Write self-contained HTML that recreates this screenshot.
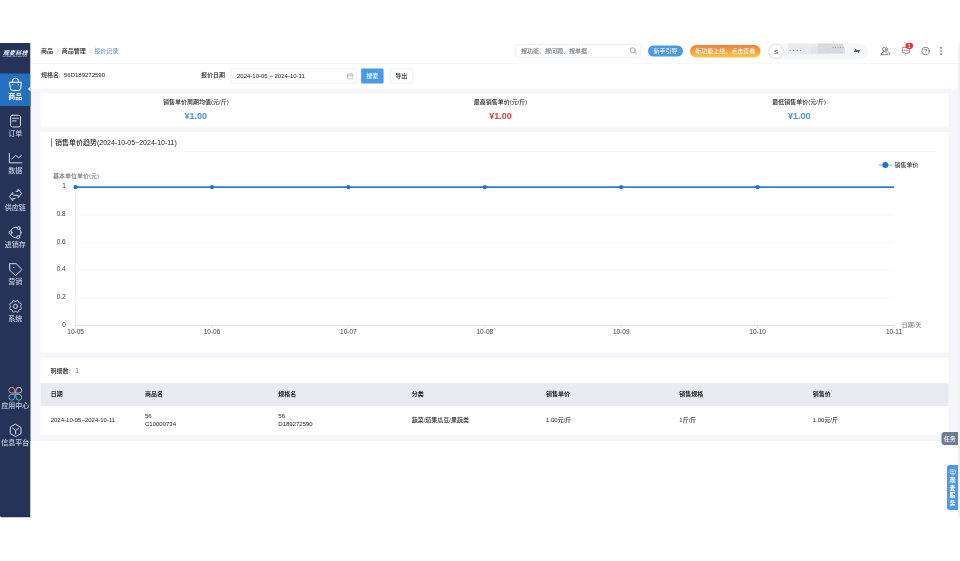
<!DOCTYPE html>
<html lang="zh-CN">
<head>
<meta charset="utf-8">
<title>报价记录</title>
<style>
*{box-sizing:border-box;margin:0;padding:0}
html,body{width:960px;height:561px;overflow:hidden;background:#fff}
body{font-family:"Liberation Sans","Noto Sans CJK SC",sans-serif;color:#333;font-weight:500}
#stage{position:absolute;left:0;top:43px;width:1920px;height:949px;transform:scale(.5);transform-origin:0 0;background:#fff;overflow:hidden;font-size:12px}
#bg{position:absolute;left:61px;top:0;right:0;height:796px;background:#f5f6fa}
.abs{position:absolute}
/* sidebar */
#side{position:absolute;left:0;top:0;width:61px;height:949px;background:#243357;border-bottom-left-radius:4px}
#logo{position:absolute;left:0;top:0;width:61px;height:60px;color:#fff;text-align:center}
#logo b{position:absolute;left:0;width:61px;top:9px;font-size:11.5px;line-height:20px;font-style:italic;font-weight:900;letter-spacing:.9px;color:#e6eaf4;padding-left:1px}
#logo i{position:absolute;left:4px;top:24px;width:52px;height:6px;font-size:4.1px;line-height:6px;font-style:normal;font-weight:700;color:#c3cbdc;white-space:nowrap;letter-spacing:0;text-align:center}
.nav{position:absolute;left:0;width:61px;height:65px;text-align:center;color:#c6cede}
.nav svg{position:absolute;left:16px;top:6px;width:30px;height:30px;fill:none;stroke:#d5dbe8;stroke-width:2;stroke-linecap:round;stroke-linejoin:round}
.nav span{position:absolute;left:0;width:61px;top:36px;font-size:14px;line-height:18px}
.nav.on{background:#2470be;color:#fff}
.nav.on span{font-weight:700}
.nav.on svg{stroke:#fff}
.nav.on:after{content:"";position:absolute;right:0;top:26px;border:5px solid transparent;border-right-color:#fff;border-left:0}
/* header */
#head{position:absolute;left:61px;top:0;right:0;height:41px;background:#fff;border-bottom:1px solid #e3e5e9}
#crumb{position:absolute;left:21px;top:7px;font-size:12px;line-height:18px;color:#222;white-space:nowrap}
#crumb em{font-style:normal;color:#c0c4cc;margin:0 7px}
#crumb u{text-decoration:none;color:#5f9fd8}

#srch{position:absolute;left:970px;top:3px;width:250px;height:26px;border:1px solid #d6dae1;border-radius:2px;background:#fff;font-size:12px;line-height:24px;color:#70757e;padding-left:10px;white-space:nowrap}
#srch svg{position:absolute;right:5px;top:4px;width:16px;height:16px;fill:none;stroke:#888;stroke-width:1.4;stroke-linecap:round}
.pill{position:absolute;color:#fff;font-size:12px;text-align:center;white-space:nowrap;font-weight:400}
#p1{left:1235px;top:5px;width:70px;height:22px;line-height:22px;border-radius:11px;background:#4a9ae6}
#p2{left:1319px;top:4px;width:141px;height:25px;line-height:25px;border-radius:13px;background:linear-gradient(180deg,#f0803f 0%,#f5a23e 50%,#f8c94a 100%)}
#user{position:absolute;left:1475px;top:1px;width:200px;height:32px;border-radius:16px;background:#f6f7f9}
#ava{position:absolute;left:1px;top:1px;width:30px;height:30px;border-radius:50%;background:#fff;border:1px solid #bcc3cd;font-size:12px;line-height:28px;text-align:center;color:#222;font-weight:400}
#blur{position:absolute;left:40px;top:0;width:124px;height:24px;background:linear-gradient(#d8dade,#d8dade) 60px 0/50px 20px no-repeat,linear-gradient(#e1e3e7,#e1e3e7) 46px 8px/68px 12px no-repeat,linear-gradient(#e8eaee,#e8eaee) 0 0/82px 22px no-repeat;filter:blur(1.2px);font-size:9px;line-height:26px;color:#6b6f78;letter-spacing:4px;white-space:nowrap;padding-left:3px;font-weight:700}
#blur span{margin-left:58px;letter-spacing:2px;position:relative;top:-5px}
#user svg{position:absolute;left:172px;top:10px;width:12px;height:10px;fill:#2a2a2a}
.hic{position:absolute;top:6px;width:20px;height:20px;fill:none;stroke:#555;stroke-width:1.7;stroke-linecap:round;stroke-linejoin:round}
#badge{position:absolute;left:1750px;top:-1px;width:15px;height:13px;border-radius:7px;background:#e5302f;color:#fff;font-size:10px;line-height:14px;text-align:center;font-weight:700}
/* filter */
#filt{position:absolute;left:61px;top:41px;right:0;height:50px;background:#fff}
#filt .lb{position:absolute;top:13px;font-size:12px;line-height:20px;color:#222;white-space:nowrap}
#date{position:absolute;left:402px;top:10px;width:250px;height:30px;border:1px solid #dcdfe6;border-radius:2px;font-size:12px;line-height:28px;padding-left:10px;color:#222;white-space:nowrap}
#date svg{position:absolute;right:5px;top:8px;width:13px;height:13px;fill:none;stroke:#999;stroke-width:1.2}
.btn{position:absolute;top:10px;width:45px;height:30px;line-height:28px;font-size:12px;text-align:center;border-radius:2px;border:1px solid #dcdfe6;background:#fff;color:#222}
.btn.pri{background:#4a9ae6;border-color:#4a9ae6;color:#fff}
/* stat */
.card{position:absolute;left:81px;width:1816px;background:#fff}
#stat{top:101px;height:66px;display:flex;justify-content:space-around}
#stat div{text-align:center;padding-top:7px}
#stat p{font-size:12px;line-height:20px;color:#222;white-space:nowrap}
#stat b{display:block;font-size:18px;line-height:22px;margin-top:7px;color:#4893e0}
#stat b.r{color:#d2423a}

/* chart */
#chart{top:178px;height:441px}
#chart:before{content:"";position:absolute;left:20px;right:20px;top:38px;height:1px;background:#f4f5f7}
#chart h3{position:absolute;left:21px;top:12px;height:18px;border-left:2px solid #4c92d6;padding-left:6px;font-size:14px;line-height:18px;font-weight:500;color:#222;white-space:nowrap}
#chart svg{position:absolute;left:0;top:0;width:1816px;height:440px;font-family:"Liberation Sans","Noto Sans CJK SC",sans-serif;font-size:12px}
/* table */
#tbl{top:630px;height:156px}
#cnt{position:absolute;left:20px;top:15px;font-size:12px;line-height:20px;color:#222}
#cnt b{color:#3f84cf;font-weight:500;margin-left:10px;font-size:13px}
#th{position:absolute;left:0;top:50px;width:1816px;height:46px;background:#e9ebf1}
#tr{position:absolute;left:0;top:96px;width:1816px;height:60px;border-bottom:1px solid #e9ebef}
.c{position:absolute;font-size:12px;white-space:nowrap;color:#222}
#th .c{top:11.5px;line-height:20px;font-weight:700}
#tr .c{top:calc(50% - 1.5px);transform:translateY(-50%);line-height:16px}
#foot{position:absolute;left:61px;top:796px;right:0;bottom:0;background:#fff}
#sb{position:absolute;left:1916px;top:0;width:4px;height:949px;background:#f0f1f3}
#task{position:absolute;left:1883px;top:778px;width:33px;height:26px;background:#6f7d92;border-radius:6px 0 0 6px;color:#fff;font-size:12px;line-height:26px;text-align:center}
#svc{position:absolute;left:1894px;top:844px;width:22px;height:90px;background:#4a9ae6;border-radius:5px 0 0 5px;color:#fff;font-size:12px;line-height:15.4px;text-align:center;font-weight:700;padding-top:22.5px}
#svc svg{position:absolute;left:5px;top:7.5px;width:13px;height:13px;fill:none;stroke:#fff;stroke-width:1.4}
</style>
</head>
<body>
<div id="stage">
  <div id="bg"></div>
  <div id="side">
    <div id="logo"><b>观麦科技</b><i>GUANMAI TECHNOLOGY</i></div>
    <div class="nav on" style="top:61px"><svg viewBox="0 0 30 30"><path d="M3.500 11.500h23l-1 11.500a5 5 0 0 1-5 5h-11a5 5 0 0 1-5-5z"/><path d="M9 11.500V9.200a6 6 0 0 1 12 0v2.300"/><path d="M9.400 16v.5M20.800 16v.5" stroke-width="2.400"/></svg><span>商品</span></div>
    <div class="nav" style="top:135px"><svg viewBox="0 0 30 30"><rect x="5.200" y="3.500" width="19.800" height="23.400" rx="3.500"/><path d="M9 9.600h12M9 14.900h7"/></svg><span>订单</span></div>
    <div class="nav" style="top:209px"><svg viewBox="0 0 30 30"><path d="M2.700 6v18.700h25"/><path d="M7.700 17.200l7.500-7.500 6.200 5 5.500-5"/></svg><span>数据</span></div>
    <div class="nav" style="top:283px"><svg viewBox="0 0 30 30"><path d="M16.400 7.600h3.800V3.600l7.100 8.200-7.100 8.400v-4.600h-9.500l-1.200-1.500V10l-6.500 8.200 6.500 8.100V22h4.500"/></svg><span>供应链</span></div>
    <div class="nav" style="top:357px"><svg viewBox="0 0 30 30"><circle cx="15.600" cy="16" r="10.500"/><circle cx="21.200" cy="7.100" r="3" fill="#243357"/><circle cx="20.500" cy="25.300" r="3" fill="#243357"/><circle cx="5.100" cy="16" r="3" fill="#243357"/></svg><span>进销存</span></div>
    <div class="nav" style="top:431px"><svg viewBox="0 0 30 30"><path d="M3.600 4.400h12.700l11 10.700a1.200 1.200 0 0 1 0 1.700l-11.500 10.700a1.200 1.200 0 0 1-1.700 0L4.200 18.100z"/><path d="M11.200 11.800h.1" stroke-width="2.800"/></svg><span>营销</span></div>
    <div class="nav" style="top:505px"><svg viewBox="0 0 30 30"><path d="M19.7 4.2L20.3 4.5L20.8 4.9L21.2 5.4L21.3 6.3L21.3 7.2L21.5 7.7L21.9 8.1L22.2 8.5L22.6 8.8L23.0 9.2L23.5 9.4L24.4 9.4L25.3 9.5L25.8 9.9L26.2 10.4L26.5 11.0L26.7 11.5L26.8 12.1L26.6 12.8L26.1 13.5L25.5 14.1L25.3 14.7L25.2 15.2L25.2 15.7L25.2 16.2L25.3 16.7L25.5 17.3L26.1 17.9L26.6 18.6L26.8 19.3L26.7 19.9L26.5 20.4L26.2 21.0L25.8 21.5L25.3 21.9L24.4 22.0L23.5 22.0L23.0 22.2L22.6 22.6L22.2 22.9L21.9 23.3L21.5 23.7L21.3 24.2L21.3 25.1L21.2 26.0L20.8 26.5L20.3 26.9L19.7 27.2L19.2 27.4L18.6 27.5L17.9 27.3L17.2 26.8L16.6 26.2L16.0 26.0L15.5 25.9L15.0 25.9L14.5 25.9L14.0 26.0L13.4 26.2L12.8 26.8L12.1 27.3L11.4 27.5L10.8 27.4L10.3 27.2L9.7 26.9L9.2 26.5L8.8 26.0L8.7 25.1L8.7 24.2L8.5 23.7L8.1 23.3L7.8 22.9L7.4 22.6L7.0 22.2L6.5 22.0L5.6 22.0L4.7 21.9L4.2 21.5L3.8 21.0L3.5 20.4L3.3 19.9L3.2 19.3L3.4 18.6L3.9 17.9L4.5 17.3L4.7 16.7L4.8 16.2L4.8 15.7L4.8 15.2L4.7 14.7L4.5 14.1L3.9 13.5L3.4 12.8L3.2 12.1L3.3 11.5L3.5 11.0L3.8 10.4L4.2 9.9L4.7 9.5L5.6 9.4L6.5 9.4L7.0 9.2L7.4 8.8L7.8 8.5L8.1 8.1L8.5 7.7L8.7 7.2L8.7 6.3L8.8 5.4L9.2 4.9L9.7 4.5L10.3 4.2L10.8 4.0L11.4 3.9L12.1 4.1L12.8 4.6L13.4 5.2L14.0 5.4L14.5 5.5L15.0 5.5L15.5 5.5L16.0 5.4L16.6 5.2L17.2 4.6L17.9 4.1L18.6 3.9L19.2 4.0z"/><circle cx="15" cy="15.700" r="4.200"/></svg><span>系统</span></div>
    <div class="nav" style="top:680px"><svg viewBox="0 0 30 30"><path d="M13.300 14.200H7.600a5.800 5.800 0 1 1 5.700-5.800z" stroke="#e9978a"/><path d="M15.900 14.200h5.700a5.800 5.800 0 1 0-5.700-5.800z" stroke="#e8b4c2"/><path d="M13.300 16.800H7.600a5.800 5.800 0 1 0 5.700 5.800z" stroke="#5fa6e6"/><path d="M15.900 16.800h5.700a5.800 5.800 0 1 1-5.700 5.800z" stroke="#55bdb5"/></svg><span>应用中心</span></div>
    <div class="nav" style="top:754px"><svg viewBox="0 0 30 30"><path d="M15.300 2.700l10.700 6.100v12.400l-10.700 6.100-10.700-6.100V8.800z"/><path d="M9.300 10.500l6 4.500 6-4.500M15.300 15v7"/></svg><span>信息平台</span></div>
  </div>
  <div id="head">
    <div id="crumb">商品<em>/</em>商品管理<em>/</em><u>报价记录</u></div>
    <div id="srch">搜功能、搜问题、搜单据<svg viewBox="0 0 16 16"><circle cx="6.500" cy="6.500" r="5"/><path d="M10.300 10.300L15 15"/></svg></div>
    <div class="pill" id="p1">新手引导</div>
    <div class="pill" id="p2">新功能上线，点击查看</div>
    <div id="user"><div id="ava">S</div><div id="blur">····<span>·····</span></div><svg viewBox="0 0 14 10"><path d="M5 0v2.600h8.500v2H.5z"/><path d="M9 10V7.400H.5v-2h13z"/></svg></div>
    <svg class="hic" style="left:1700px" viewBox="0 0 24 24"><circle cx="9" cy="8" r="4.500"/><path d="M1.500 20c1-4.500 4-6 7.500-6s6.500 1.500 7.500 6z"/><path d="M14.500 3.800a4.500 4.500 0 0 1 0 8.400M18 14.500c2.500.8 4 2.700 4.500 5.500H20"/></svg>
    <svg class="hic" style="left:1741px" viewBox="0 0 24 24"><path d="M3.500 4.500a1.500 1.500 0 0 1 1.500-1.500h14.500a1.500 1.500 0 0 1 1.500 1.500v10.500a1.500 1.500 0 0 1-1.500 1.500h-4l-3 3.500-3-3.500h-4.500a1.500 1.500 0 0 1-1.500-1.500z"/><path d="M7.500 10h.1M12.200 10h.1M16.900 10h.1" stroke="#333" stroke-width="2.500"/></svg>
    <div id="badge">1</div>
    <svg class="hic" style="left:1780px" viewBox="0 0 24 24"><circle cx="12" cy="12" r="9"/><text x="12" y="17" text-anchor="middle" font-size="14" font-family="Liberation Sans,sans-serif" fill="#444" stroke="none" font-weight="400">?</text></svg>
    <svg class="hic" style="left:1811px;stroke:none;fill:#555" viewBox="0 0 24 24"><circle cx="12" cy="4.500" r="2"/><circle cx="12" cy="12" r="2"/><circle cx="12" cy="19.500" r="2"/></svg>
  </div>
  <div id="filt">
    <div class="lb" style="left:21px">规格名:&nbsp; 56D189272590</div>
    <div class="lb" style="left:341px">报价日期</div>
    <div id="date">2024-10-05 ~ 2024-10-11<svg viewBox="0 0 13 13"><rect x="1" y="2" width="11" height="10" rx="1"/><path d="M1 5.500h11M4 1v1.500M9 1v1.500"/></svg></div>
    <div class="btn pri" style="left:661px">搜索</div>
    <div class="btn" style="left:719px">导出</div>
  </div>
  <div class="card" id="stat">
    <div><p>销售单价周期均值(元/斤)</p><b>¥1.00</b></div>
    <div><p>最高销售单价(元/斤)</p><b class="r">¥1.00</b></div>
    <div><p>最低销售单价(元/斤)</p><b>¥1.00</b></div>
  </div>
  <div class="card" id="chart">
    <h3>销售单价趋势(2024-10-05~2024-10-11)</h3>
      <svg viewBox="0 0 1816 440">
      <path d="M70.2 110.4H1707.0" stroke="#eef0f3" stroke-width="1"/>
      <path d="M70.2 165.7H1707.0" stroke="#eef0f3" stroke-width="1"/>
      <path d="M70.2 221.0H1707.0" stroke="#eef0f3" stroke-width="1"/>
      <path d="M70.2 276.2H1707.0" stroke="#eef0f3" stroke-width="1"/>
      <path d="M70.2 331.5H1707.0" stroke="#eef0f3" stroke-width="1"/>
      <path d="M70.2 110.4V386.8" stroke="#e1e3e8" stroke-width="1"/>
      <path d="M70.2 386.8H1707.0" stroke="#c8c8c8" stroke-width="1.200"/>
      <path d="M70.2 386.8v5" stroke="#c8c8c8" stroke-width="1"/>
      <path d="M343.0 386.8v5" stroke="#c8c8c8" stroke-width="1"/>
      <path d="M615.8 386.8v5" stroke="#c8c8c8" stroke-width="1"/>
      <path d="M888.6 386.8v5" stroke="#c8c8c8" stroke-width="1"/>
      <path d="M1161.4 386.8v5" stroke="#c8c8c8" stroke-width="1"/>
      <path d="M1434.2 386.8v5" stroke="#c8c8c8" stroke-width="1"/>
      <path d="M1707.0 386.8v5" stroke="#c8c8c8" stroke-width="1"/>
      <text x="50.500" y="112.9" text-anchor="end" fill="#3a3a3a" font-size="13">1</text>
      <text x="50.500" y="168.2" text-anchor="end" fill="#3a3a3a" font-size="13">0.8</text>
      <text x="50.500" y="223.5" text-anchor="end" fill="#3a3a3a" font-size="13">0.6</text>
      <text x="50.500" y="278.7" text-anchor="end" fill="#3a3a3a" font-size="13">0.4</text>
      <text x="50.500" y="334.0" text-anchor="end" fill="#3a3a3a" font-size="13">0.2</text>
      <text x="50.500" y="389.3" text-anchor="end" fill="#3a3a3a" font-size="13">0</text>
      <text x="70.2" y="404" text-anchor="middle" fill="#3a3a3a" font-size="13">10-05</text>
      <text x="343.0" y="404" text-anchor="middle" fill="#3a3a3a" font-size="13">10-06</text>
      <text x="615.8" y="404" text-anchor="middle" fill="#3a3a3a" font-size="13">10-07</text>
      <text x="888.6" y="404" text-anchor="middle" fill="#3a3a3a" font-size="13">10-08</text>
      <text x="1161.4" y="404" text-anchor="middle" fill="#3a3a3a" font-size="13">10-09</text>
      <text x="1434.2" y="404" text-anchor="middle" fill="#3a3a3a" font-size="13">10-10</text>
      <text x="1707.0" y="404" text-anchor="middle" fill="#3a3a3a" font-size="13">10-11</text>
      <text x="25" y="92.500" fill="#707070">基本单位单价(元)</text>
      <text x="1722.500" y="389.500" fill="#7a7a7a">日期/天</text>
      <path d="M70.2 110.4H1707.0" stroke="#2f78cc" stroke-width="3.400" fill="none"/>
      <circle cx="70.2" cy="110.4" r="4.200" fill="#2470cc"/>
      <circle cx="343.0" cy="110.4" r="4.200" fill="#2470cc"/>
      <circle cx="615.8" cy="110.4" r="4.200" fill="#2470cc"/>
      <circle cx="888.6" cy="110.4" r="4.200" fill="#2470cc"/>
      <circle cx="1161.4" cy="110.4" r="4.200" fill="#2470cc"/>
      <circle cx="1434.2" cy="110.4" r="4.200" fill="#2470cc"/>
      <path d="M1676.500 66.200H1702.600" stroke="#8fbdf0" stroke-width="2.500"/>
      <circle cx="1689.600" cy="66.200" r="6" fill="#1f74d6"/>
      <text x="1707.800" y="70.500" fill="#333">销售单价</text>
      </svg>
  </div>
  <div class="card" id="tbl">
    <div id="cnt">明细数:<b>1</b></div>
    <div id="th"><div class="c" style="left:20.4px">日期</div><div class="c" style="left:209px">商品名</div><div class="c" style="left:475.6px">规格名</div><div class="c" style="left:742.4px">分类</div><div class="c" style="left:1011px">销售单价</div><div class="c" style="left:1277.6px">销售规格</div><div class="c" style="left:1544.4px">销售价</div></div>
    <div id="tr"><div class="c" style="left:20.4px">2024-10-05~2024-10-11</div><div class="c" style="left:209px">56<br>C10000734</div><div class="c" style="left:475.6px">56<br>D189272590</div><div class="c" style="left:742.4px">蔬菜/茄果瓜豆/果蔬类</div><div class="c" style="left:1011px">1.00元/斤</div><div class="c" style="left:1277.6px">1斤/斤</div><div class="c" style="left:1544.4px">1.00元/斤</div></div>
  </div>
  <div id="foot"></div>
  <div id="task">任务</div>
  <div id="svc"><svg viewBox="0 0 13 13"><rect x="1" y="1.500" width="11" height="8" rx="2.500"/><path d="M4 12h5M3.500 5.500h6"/></svg>观<br>麦<br>服<br>务</div>
  <div id="sb"></div>
</div>
</body>
</html>
